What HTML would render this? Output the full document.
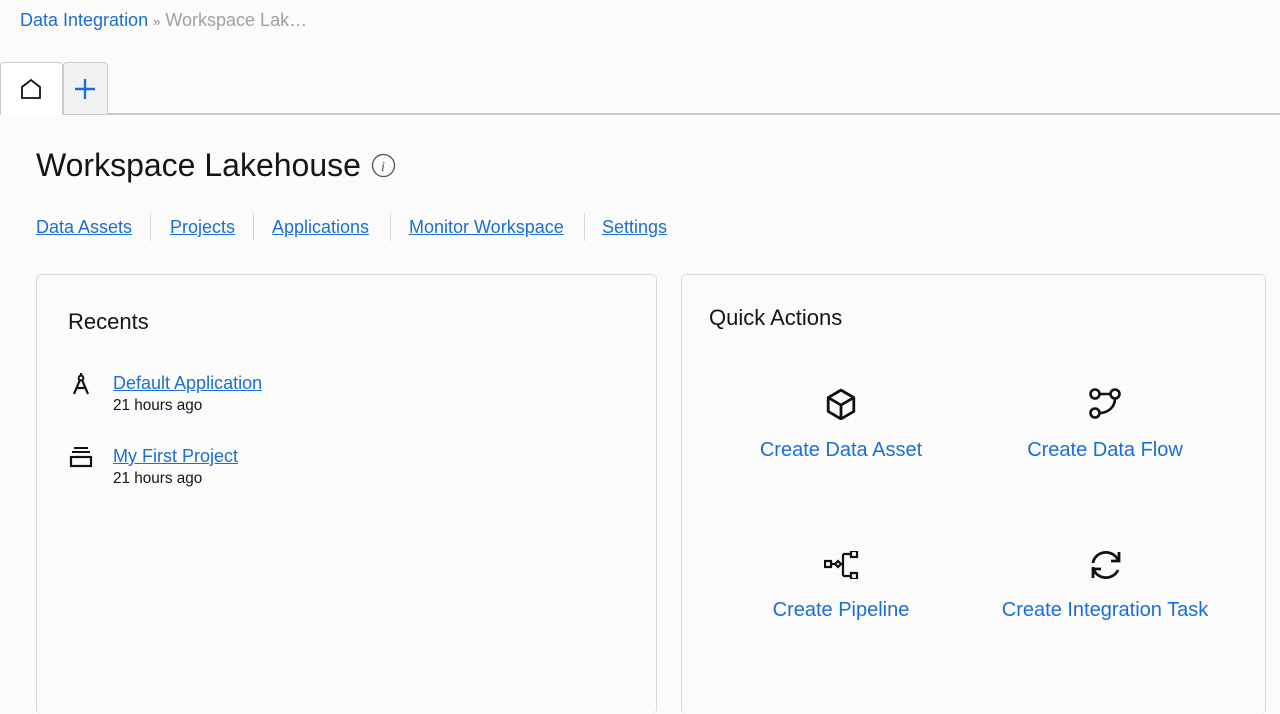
<!DOCTYPE html>
<html><head><meta charset="utf-8"><style>
*{box-sizing:border-box;margin:0;padding:0}
body{width:1280px;height:701px;overflow:hidden;background:#fbfbfb;font-family:"Liberation Sans",Arial,sans-serif;color:#161513;position:relative}
.a{position:absolute}
a{color:#1b6ed3;text-decoration:underline}
.bl{color:#1b6ed3}
.card{position:absolute;border:1px solid #d4d9de;border-radius:5px;background:#fbfbfb;border-bottom:none}
.nav a{position:absolute;top:217px;font-size:18px}
.sep{position:absolute;top:213px;width:1px;height:28px;background:#d4d9de}
.qa{position:absolute;font-size:20px;color:#1b6ed3;text-align:center;width:300px}
</style></head><body>
<div class="a" style="left:20px;top:10px;font-size:18px"><span class="bl">Data Integration</span> <span style="color:#888;font-size:13px">»</span> <span style="color:#a0a0a0">Workspace Lak…</span></div>
<div class="a" style="left:0;top:113px;width:1280px;height:2px;background:#c6cbd0"></div>
<div class="a" style="left:0;top:62px;width:63px;height:53px;background:#fff;border:1px solid #c6cbd0;border-bottom:none;border-radius:4px 4px 0 0"></div>
<svg class="a" style="left:20px;top:78px" width="22" height="22" viewBox="0 0 22 22"><path d="M2 20V9L11 2L20 9V20Z" fill="none" stroke="#111" stroke-width="1.8"/></svg>
<div class="a" style="left:63px;top:62px;width:45px;height:52px;background:#f1f2f3;border:1px solid #c6cbd0;border-bottom:none;border-radius:4px 4px 0 0"></div>
<svg class="a" style="left:74px;top:78px" width="22" height="22"><path d="M11 1V21M1 11H21" stroke="#1b6ed3" stroke-width="2.4"/></svg>
<div class="a" style="left:36px;top:147px;font-size:32px">Workspace Lakehouse</div>
<svg class="a" style="left:371px;top:153px" width="25" height="25"><circle cx="12.5" cy="12.5" r="11" fill="none" stroke="#555" stroke-width="1.3"/><text x="10" y="18" font-size="14" font-style="italic" font-family="Liberation Serif" fill="#555">i</text></svg>
<div class="nav"><a style="left:36px">Data Assets</a><a style="left:170px">Projects</a><a style="left:272px">Applications</a><a style="left:409px">Monitor Workspace</a><a style="left:602px">Settings</a></div>
<div class="sep" style="left:150px"></div><div class="sep" style="left:253px"></div><div class="sep" style="left:390px"></div><div class="sep" style="left:584px"></div>
<div class="card" style="left:36px;top:274px;width:621px;height:440px"></div>
<div class="card" style="left:681px;top:274px;width:585px;height:440px"></div>
<div class="a" style="left:68px;top:309px;font-size:22px">Recents</div>
<svg class="a" style="left:71px;top:373px" width="20" height="22" viewBox="0 0 20 22"><circle cx="10" cy="5" r="2.4" fill="none" stroke="#111" stroke-width="2"/><path d="M10 0V2.5M8.8 7.2L3 21M11.2 7.2L17 21M5 15H15" stroke="#111" stroke-width="2.2" fill="none"/></svg>
<a class="a" style="left:113px;top:373px;font-size:18px">Default Application</a>
<div class="a" style="left:113px;top:397px;font-size:15.3px">21 hours ago</div>
<svg class="a" style="left:69px;top:446px" width="24" height="22"><path d="M5 2H19M3 6H21" stroke="#111" stroke-width="2"/><rect x="2" y="11" width="20" height="9" fill="none" stroke="#111" stroke-width="2.2"/></svg>
<a class="a" style="left:113px;top:446px;font-size:18px">My First Project</a>
<div class="a" style="left:113px;top:470px;font-size:15.3px">21 hours ago</div>
<div class="a" style="left:709px;top:305px;font-size:22px">Quick Actions</div>
<svg class="a" style="left:825px;top:388px" width="32" height="32" viewBox="0 0 30 30"><path d="M15 2L27 9V22L15 29L3 22V9ZM3 9L15 16L27 9M15 16V29" fill="none" stroke="#111" stroke-width="2.6" stroke-linejoin="round"/></svg>
<div class="qa" style="left:691px;top:439px">Create Data Asset</div>
<svg class="a" style="left:1088px;top:387px" width="34" height="34" viewBox="0 0 34 34"><circle cx="7" cy="7" r="4.5" fill="none" stroke="#111" stroke-width="2.6"/><circle cx="27" cy="7" r="4.5" fill="none" stroke="#111" stroke-width="2.6"/><circle cx="7" cy="26" r="4.5" fill="none" stroke="#111" stroke-width="2.6"/><path d="M11.5 7H22.5M27 11.5C27 20 20 26 11.5 26" fill="none" stroke="#111" stroke-width="2.6"/></svg>
<div class="qa" style="left:955px;top:439px">Create Data Flow</div>
<svg class="a" style="left:824px;top:551px" width="36" height="28" viewBox="0 0 36 28"><rect x="1" y="10" width="6" height="6" fill="none" stroke="#111" stroke-width="2.2"/><path d="M7 13H11L14 10L17 13L14 16L11 13M17 13H19M19 3V25M19 3H27M19 25H27" fill="none" stroke="#111" stroke-width="2.2"/><rect x="27" y="0" width="6" height="6" fill="none" stroke="#111" stroke-width="2.2"/><rect x="27" y="22" width="6" height="6" fill="none" stroke="#111" stroke-width="2.2"/></svg>
<div class="qa" style="left:691px;top:599px">Create Pipeline</div>
<svg class="a" style="left:1089px;top:548px" width="34" height="34" viewBox="0 0 34 34"><path d="M4 15A13 12 0 0 1 29 12M4 19A13 12 0 0 0 29 22" fill="none" stroke="#111" stroke-width="2.8"/><path d="M30 4V13H22M4 30V21H12" fill="none" stroke="#111" stroke-width="2.8"/></svg>
<div class="qa" style="left:955px;top:599px">Create Integration Task</div>
</body></html>
